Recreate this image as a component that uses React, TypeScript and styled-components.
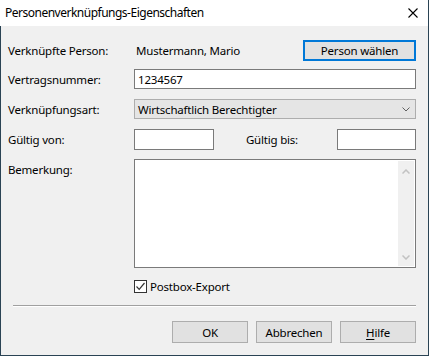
import React from "react";
import styled, { createGlobalStyle } from "styled-components";

const Global = createGlobalStyle`
  html, body { margin: 0; padding: 0; background: #ffffff; }
  body { font-family: "Noto Sans", "Open Sans", sans-serif; font-size: 11.5px; letter-spacing: -0.2px; color: #000; }
  * { box-sizing: border-box; }
`;

const Window = styled.div`
  width: 429px;
  height: 356px;
  display: flex;
  flex-direction: column;
  border-right: 1px solid #2a4354;
  border-bottom: 1px solid #2a4354;
  background: #f0f0f0;
  overflow: hidden;
`;

const TitleBar = styled.div`
  height: 26px;
  flex: none;
  background: #ffffff;
  display: flex;
  align-items: center;
  justify-content: space-between;
  padding: 0 10px 0 5px;
`;

const Title = styled.span`
  font-size: 12px;
  letter-spacing: -0.5px;
  padding-bottom: 1px;
`;

const CloseIcon = styled.svg`
  width: 10px;
  height: 10px;
  display: block;
`;

const Body = styled.div`
  flex: 1;
  border-left: 1px solid #2a4354;
  padding: 14px 12px 0 7px;
  display: flex;
  flex-direction: column;
`;

const Row = styled.div<{ $mt?: number; $h: number }>`
  display: grid;
  grid-template-columns: 126px 1fr;
  align-items: center;
  margin-top: ${(p) => p.$mt ?? 0}px;
  height: ${(p) => p.$h}px;
`;

const TopRow = styled(Row)`
  align-items: start;
`;

const Label = styled.span<{ $pt?: number }>`
  white-space: nowrap;
  padding-top: ${(p) => p.$pt ?? 0}px;
`;

const Value = styled.div`
  display: flex;
  align-items: center;
  justify-content: space-between;
  padding-left: 2px;
`;

const Button = styled.button<{ $focused?: boolean }>`
  font: inherit;
  letter-spacing: inherit;
  color: #000;
  background: #e1e1e1;
  border: ${(p) => (p.$focused ? "2px solid #0078d7" : "1px solid #adadad")};
  width: ${(p) => (p.$focused ? "113px" : "76px")};
  height: ${(p) => (p.$focused ? "21px" : "22px")};
  padding: 0;
  display: flex;
  align-items: center;
  justify-content: center;
`;

const TextInput = styled.div<{ $w?: number }>`
  width: ${(p) => (p.$w ? `${p.$w}px` : "100%")};
  height: 100%;
  background: #fff;
  border: 1px solid #7a7a7a;
  display: flex;
  align-items: center;
  padding-left: 3px;
`;

const Select = styled.div`
  height: 100%;
  background: #e5e5e5;
  border: 1px solid #adadad;
  display: flex;
  align-items: center;
  justify-content: space-between;
  padding: 0 5px 0 3px;
`;

const Chevron = styled.svg`
  width: 8px;
  height: 5px;
  display: block;
`;

const DateRow = styled.div`
  display: flex;
  align-items: center;
  height: 100%;
`;

const DateLabel = styled.span`
  margin-left: auto;
  margin-right: 39px;
  white-space: nowrap;
`;

const TextArea = styled.div`
  height: 100%;
  background: #fff;
  border: 1px solid #7a7a7a;
  display: flex;
  justify-content: flex-end;
  padding: 1px;
`;

const ScrollBar = styled.div`
  width: 16px;
  background: #f0f0f0;
  display: flex;
  flex-direction: column;
  justify-content: space-between;
  align-items: center;
  padding: 8px 0 6px;
`;

const ScrollArrow = styled.svg`
  width: 8px;
  height: 5px;
  display: block;
`;

const CheckRow = styled.label`
  display: flex;
  align-items: center;
  gap: 3px;
`;

const CheckBox = styled.span`
  width: 13px;
  height: 13px;
  border: 1px solid #333;
  background: #fff;
  display: flex;
  align-items: center;
  justify-content: center;
`;

const Separator = styled.div`
  margin: 11px 0 0 5px;
  height: 2px;
  border-top: 1px solid #a0a0a0;
  border-bottom: 1px solid #ffffff;
`;

const Footer = styled.div`
  display: flex;
  justify-content: flex-end;
  gap: 8px;
  margin-top: 14px;
`;

const Underline = styled.span`
  text-decoration: underline;
  text-underline-offset: 2px;
`;

export default function App() {
  return (
    <>
      <Global />
      <Window>
        <TitleBar>
          <Title>Personenverknüpfungs-Eigenschaften</Title>
          <CloseIcon viewBox="0 0 10 10">
            <path d="M0.5 0.5 L9.5 9.5 M9.5 0.5 L0.5 9.5" stroke="#000" strokeWidth="1.1" fill="none" />
          </CloseIcon>
        </TitleBar>
        <Body>
          <Row $h={21}>
            <Label>Verknüpfte Person:</Label>
            <Value>
              <span>Mustermann, Mario</span>
              <Button $focused>Person wählen</Button>
            </Value>
          </Row>
          <Row $h={20} $mt={8}>
            <Label>Vertragsnummer:</Label>
            <TextInput>1234567</TextInput>
          </Row>
          <Row $h={20} $mt={10}>
            <Label>Verknüpfungsart:</Label>
            <Select>
              <span>Wirtschaftlich Berechtigter</span>
              <Chevron viewBox="0 0 8 5">
                <path d="M0.5 0.5 L4 4 L7.5 0.5" stroke="#606060" strokeWidth="1" fill="none" />
              </Chevron>
            </Select>
          </Row>
          <Row $h={21} $mt={10}>
            <Label>Gültig von:</Label>
            <DateRow>
              <TextInput $w={80} />
              <DateLabel>Gültig bis:</DateLabel>
              <TextInput $w={79} />
            </DateRow>
          </Row>
          <TopRow $h={109} $mt={9}>
            <Label $pt={3}>Bemerkung:</Label>
            <TextArea>
              <ScrollBar>
                <ScrollArrow viewBox="0 0 8 5">
                  <path d="M0.5 4.5 L4 1 L7.5 4.5" stroke="#c2c2c2" strokeWidth="1.5" fill="none" />
                </ScrollArrow>
                <ScrollArrow viewBox="0 0 8 5">
                  <path d="M0.5 0.5 L4 4 L7.5 0.5" stroke="#c2c2c2" strokeWidth="1.5" fill="none" />
                </ScrollArrow>
              </ScrollBar>
            </TextArea>
          </TopRow>
          <Row $h={15} $mt={11}>
            <span />
            <CheckRow>
              <CheckBox>
                <svg width="11" height="11" viewBox="0 0 11 11">
                  <path d="M1.5 5.5 L4.2 8.3 L9.5 2" stroke="#333" strokeWidth="1.2" fill="none" />
                </svg>
              </CheckBox>
              <span>Postbox-Export</span>
            </CheckRow>
          </Row>
          <Separator />
          <Footer>
            <Button>OK</Button>
            <Button>Abbrechen</Button>
            <Button>
              <Underline>H</Underline>ilfe
            </Button>
          </Footer>
        </Body>
      </Window>
    </>
  );
}
